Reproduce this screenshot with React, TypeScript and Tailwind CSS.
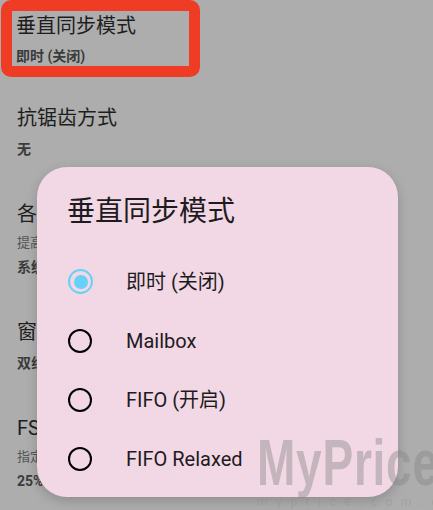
import { useState } from 'react'

const font = { fontFamily: 'Roboto, "Noto Sans CJK SC", sans-serif' }

type Setting = { title: string; hint?: string; value: string }

const settings: Setting[] = [
  { title: '抗锯齿方式', value: '无' },
  { title: '各向异性过滤', hint: '提高纹理在倾斜视角下的显示质量', value: '系统默认' },
  { title: '窗口自适应过滤器', value: '双线性' },
  { title: 'FSR 锐化度', hint: '指定使用 FSR 时图像锐化的程度', value: '25%' },
]

const modes = ['即时 (关闭)', 'Mailbox', 'FIFO (开启)', 'FIFO Relaxed']

function Radio({ checked }: { checked: boolean }) {
  return checked ? (
    <span className="flex h-[25px] w-[25px] items-center justify-center rounded-full border-[2.5px] border-[#66d2f7]">
      <span className="h-[14px] w-[14px] rounded-full bg-[#66d2f7]" />
    </span>
  ) : (
    <span className="h-[24px] w-[24px] rounded-full border-[2.5px] border-black" />
  )
}

export default function App() {
  const [mode, setMode] = useState(0)

  return (
    <div className="relative h-[510px] w-[433px] overflow-hidden bg-[#adadad]" style={font}>
      {/* settings list behind the scrim */}
      <div className="ml-[1px] h-[77px] w-[199px] rounded-[10px] border-[11px] border-[#ee3c25]">
        <div className="mt-[1px] pl-[4px] text-[20px] leading-[28px] text-[#1e1e1e]">垂直同步模式</div>
        <div className="mt-[6px] pl-[4px] text-[14px] font-bold leading-[20px] text-[#3b3b3b]">即时 (关闭)</div>
      </div>
      <div className="mt-[27px] flex flex-col gap-[41px]">
        {settings.map((s) => (
          <div key={s.title} className="px-[17px]">
            <div className="text-[20px] leading-[28px] text-[#1e1e1e]">{s.title}</div>
            {s.hint ? (
              <>
                <div className="mt-[6px] text-[13px] leading-[18px] text-[#555]">{s.hint}</div>
                <div className="mt-[5px] text-[14px] font-bold leading-[20px] text-[#3b3b3b]">{s.value}</div>
              </>
            ) : (
              <div className="mt-[7px] text-[14px] font-bold leading-[20px] text-[#3b3b3b]">{s.value}</div>
            )}
          </div>
        ))}
      </div>

      {/* vsync picker dialog */}
      <div className="absolute left-[37px] top-[167px] h-[330px] w-[361px] rounded-[30px] bg-[#f2d7e4] shadow-[0_4px_12px_rgba(0,0,0,0.18)]">
        <div className="pl-[30px] pt-[26px] text-[28px] leading-[38px] text-[#1d1b1e]">垂直同步模式</div>
        <div className="mt-[21px] flex flex-col">
          {modes.map((m, i) => (
            <button
              key={m}
              onClick={() => setMode(i)}
              className="flex h-[59px] items-center text-left"
            >
              <span className="ml-[31px] flex w-[58px]">
                <Radio checked={mode === i} />
              </span>
              <span className="text-[20px] text-[#1d1b1e]">{m}</span>
            </button>
          ))}
        </div>
      </div>

      {/* watermark */}
      <div className="pointer-events-none absolute left-[257px] top-[428px] flex flex-col items-start">
        <span
          className="origin-left scale-x-[0.72] text-[64px] font-bold leading-[70px] tracking-[1px] text-[rgba(134,134,134,0.43)]"
          style={{ fontFamily: '"Liberation Sans", sans-serif' }}
        >
          MyPrice
        </span>
        <span className="-mt-[2px] whitespace-nowrap text-[12px] leading-[12px] tracking-[8.5px] text-[rgba(134,134,134,0.3)]">
          myprice.com.cn
        </span>
      </div>
    </div>
  )
}
